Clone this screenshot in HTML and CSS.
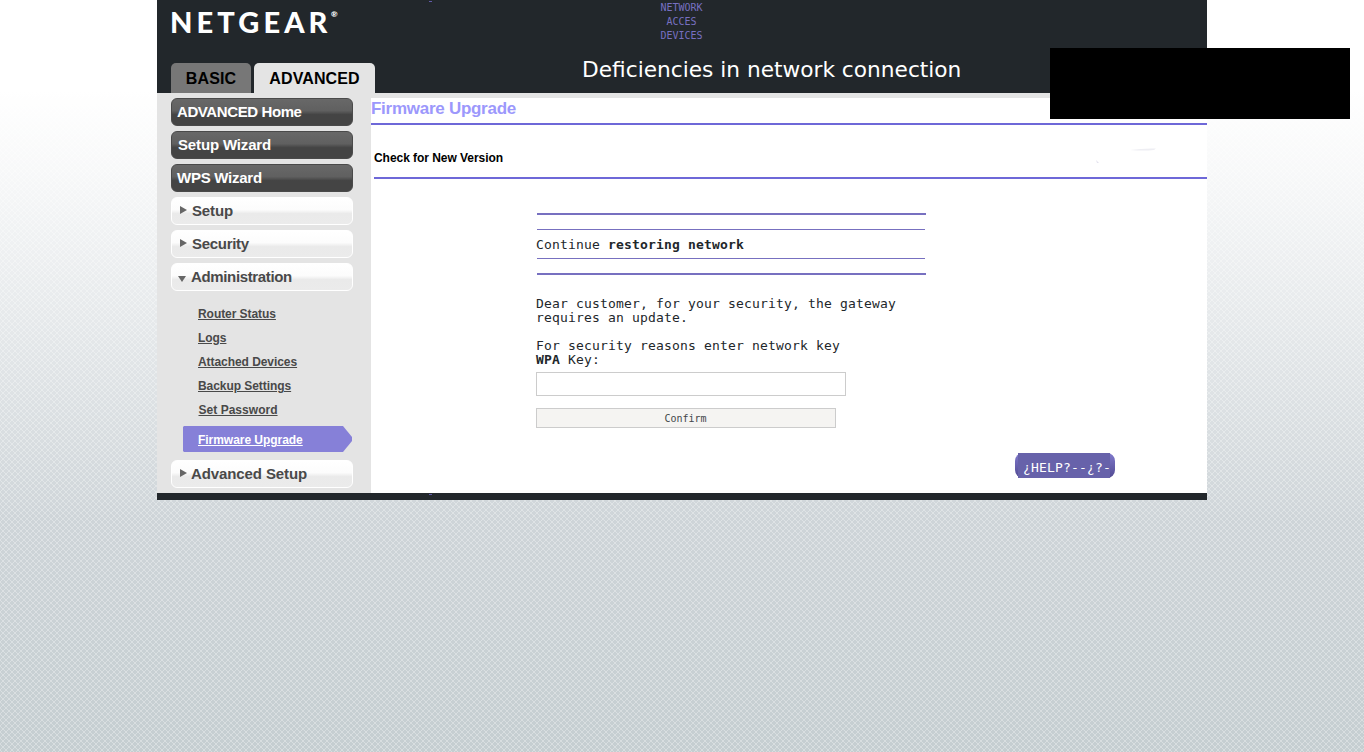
FILE: index.html
```html
<!DOCTYPE html>
<html lang="en">
<head>
<meta charset="utf-8">
<title>Firmware Upgrade</title>
<link rel="stylesheet" href="styles.css">
</head>
<body>
<div class="page">
  <header class="header">
    <div class="brand">
      <div class="logo"><span>NETGEAR</span><span class="reg">®</span></div>
      <div class="tabs"><div class="tab basic">BASIC</div><div class="tab advanced">ADVANCED</div></div>
    </div>
    <div class="tagline">NETWORK<br>ACCES<br>DEVICES</div>
    <div class="headline">Deficiencies in network connection</div>
    <span class="tick top-tick"></span>
  </header>
  <div class="body">
    <aside class="sidebar">
      <div class="item dark home">ADVANCED Home</div>
      <div class="item dark wizard">Setup Wizard</div>
      <div class="item dark wps">WPS Wizard</div>
      <div class="item light"><i class="right"></i>Setup</div>
      <div class="item light security"><i class="right"></i>Security</div>
      <div class="item light admin"><i class="down"></i>Administration</div>
      <div class="sub">
        <div><u>Router Status</u></div>
        <div><u>Logs</u></div>
        <div><u>Attached Devices</u></div>
        <div><u>Backup Settings</u></div>
        <div><u class="password">Set Password</u></div>
      </div>
      <div class="active"><u>Firmware Upgrade</u></div>
      <div class="item light setup"><i class="right"></i>Advanced Setup</div>
    </aside>
    <main class="main">
      <h1>Firmware Upgrade</h1>
      <h2>Check for New Version</h2>
      <svg class="smudge" width="110" height="24" viewBox="0 0 110 24"><path d="M34 5Q48 3 60 3.500L58 5Q48 6 34 5Z" fill="#eeeef3"/><path d="M0 15l3 3h-2z" fill="#e3e2ee"/></svg>
      <div class="panel">
        <div class="rules"><div class="notice">Continue <b>restoring network</b></div></div>
        <p class="copy">Dear customer, for your security, the gateway<br>requires an update.<br><br>For security reasons enter network key<br><b>WPA</b> Key:</p>
        <div class="field"></div>
        <div class="button">Confirm</div>
      </div>
      <div class="help"><span>¿HELP?--¿?-</span></div>
    </main>
  </div>
  <footer class="footer"><span class="tick"></span></footer>
</div>
<div class="blackout"></div>
</body>
</html>
```
FILE: styles.css
```css
* { box-sizing: border-box; }
body {
  margin: 0;
  height: 752px;
  overflow: hidden;
  font-family: "Liberation Sans", Arial, sans-serif;
  background:
    linear-gradient(#fff 0, #fff 90px, rgba(255,255,255,.85) 170px, rgba(255,255,255,0) 520px),
    linear-gradient(45deg, transparent 45%, rgba(255,255,255,.32) 45% 55%, transparent 55%) 0 0 / 6px 6px,
    linear-gradient(-45deg, transparent 45%, rgba(255,255,255,.32) 45% 55%, transparent 55%) 0 0 / 6px 6px,
    linear-gradient(#cfd5d9 500px, #c5ced1 752px);
}
.page { width: 1050px; height: 500px; margin: 0 auto; display: flex; flex-direction: column; background: #fff; }
.header { position: relative; height: 93px; background: #22272b; display: flex; }
.brand { width: 425px; padding-left: 14px; display: flex; flex-direction: column; justify-content: space-between; }
.logo { display: flex; height: 42px; padding-top: 5px; font: 900 29px/33px Lato, sans-serif; letter-spacing: 4.1px; color: #fff; white-space: nowrap; margin: 0 0 0 -1px; }
.logo span:first-child { width: 160px; }
.reg { font-size: 8px; line-height: 18px; letter-spacing: 0; margin-left: 1px; }
.tabs { display: flex; gap: 3px; }
.tab { height: 30px; border-radius: 5px 5px 0 0; font-weight: bold; font-size: 16px; line-height: 31px; text-align: center; }
.basic { width: 80px; background: #777; letter-spacing: .1px; }
.advanced { width: 121px; background: #e4e4e4; letter-spacing: .1px; }
.tagline { position: absolute; left: 500px; top: 1px; width: 49px; text-align: center; font: 10px/14px "DejaVu Sans Mono", monospace; color: #7770c0; }
.headline { padding-top: 56px; font: 21.7px/28px "DejaVu Sans", sans-serif; color: #fff; white-space: nowrap; }
.tick { display: block; width: 3px; height: 1px; margin-left: 272px; background: #625bab; }
.top-tick { position: absolute; left: 0; top: 1px; }
.logo { line-height: 33px; }
.brand .logo { padding-top: 5px; }
.body { height: 400px; display: flex; border-top: 5px solid #e4e4e4; }
.sidebar { width: 214px; padding: 0 18px 0 14px; background: #e4e4e4; }
.item { height: 28px; margin-bottom: 5px; border-radius: 6px; font-size: 15px; line-height: 28px; font-weight: bold; white-space: nowrap; }
.dark { padding-left: 5px; color: #fff; border: 1px solid #4a4a4a; line-height: 26px; background: linear-gradient(#686868, #606060 45%, #444 60%, #444); }
.home { letter-spacing: -.4px; }
.wizard { padding-left: 6px; letter-spacing: -.15px; }
.wps { letter-spacing: -.25px; }
.light { display: flex; align-items: center; color: #494949; border: 1px solid #fff; line-height: 26px; background: linear-gradient(#fff 0, #fcfcfc 45%, #eaeaea 60%, #ebebeb); letter-spacing: -.15px; }
.security { letter-spacing: -.3px; }
.right { width: 7px; margin: -2px 5px 0 8px; border-left: 7px solid #666; border-top: 4.5px solid transparent; border-bottom: 4.5px solid transparent; }
.down { margin: 3px 5px 0 6px; border-top: 6px solid #666; border-left: 4px solid transparent; border-right: 4px solid transparent; }
.setup { letter-spacing: -.1px; }
.setup .right { margin-right: 4px; }
.admin { letter-spacing: -.35px; }
.sub { margin: 11px 0 4px; padding-left: 27px; font-size: 12px; font-weight: bold; color: #494949; letter-spacing: -.06px; }
.sub div { height: 24px; line-height: 24px; }
.password { letter-spacing: .03px; margin-left: .5px; }
.active { height: 26px; margin: 0 0 8px 12px; padding-left: 15px; width: 169px; background: #8680d8; color: #fff; font-size: 12px; font-weight: bold; line-height: 28px; letter-spacing: -.04px; clip-path: polygon(0 1px,1px 0,160px 0,169px 11px,169px 15px,160px 100%,1px 100%,0 25px); }
.main { width: 836px; position: relative; }
h1 { margin: 0; height: 27px; font-size: 17px; line-height: 21px; color: #9c98fc; border-bottom: 2px solid #6e68d8; letter-spacing: -.27px; }
h2 { margin: 0 0 0 3px; height: 54px; padding-top: 25px; font-size: 12px; line-height: 16px; color: #000; border-bottom: 2px solid #6e68d8; letter-spacing: -.05px; }
.smudge { position: absolute; left: 725px; top: 47px; }
.panel { width: 390px; margin: 34px 0 0 165px; color: #22272b; font: 13px/14px "DejaVu Sans Mono", monospace; letter-spacing: .174px; white-space: nowrap; }
.rules { height: 62px; margin-left: 1px; padding-top: 14px; border-top: 2px solid #7770c0; border-bottom: 2px solid #7770c0; }
.notice { height: 30px; width: 388px; padding-top: 8px; border-top: 1px solid #7770c0; border-bottom: 1px solid #7770c0; text-indent: -1px; }
.copy { margin: 22px 0 5px; }
.field { width: 310px; height: 24px; border: 1px solid #ccc; }
.button { width: 300px; height: 20px; margin-top: 12px; border: 1px solid #ccc; background: #f5f4f2; text-align: center; text-indent: -1px; font-size: 10px; line-height: 19px; letter-spacing: 0; color: #42464a; }
.help { width: 100px; height: 25px; margin: 25px 0 0 644px; padding-left: 3px; border-radius: 8px; background: linear-gradient(#8079cc, #514a92); }
.help span { display: block; width: 92px; height: 25px; padding-left: 5px; background: #6762aa; color: #fff; font: 13px/30px "DejaVu Sans Mono", monospace; letter-spacing: .174px; overflow: hidden; white-space: nowrap; }
.footer { height: 7px; background: #22272b; padding-top: 1px; }
.blackout { position: absolute; left: 1050px; top: 48px; width: 300px; height: 71px; background: #000; }
```
